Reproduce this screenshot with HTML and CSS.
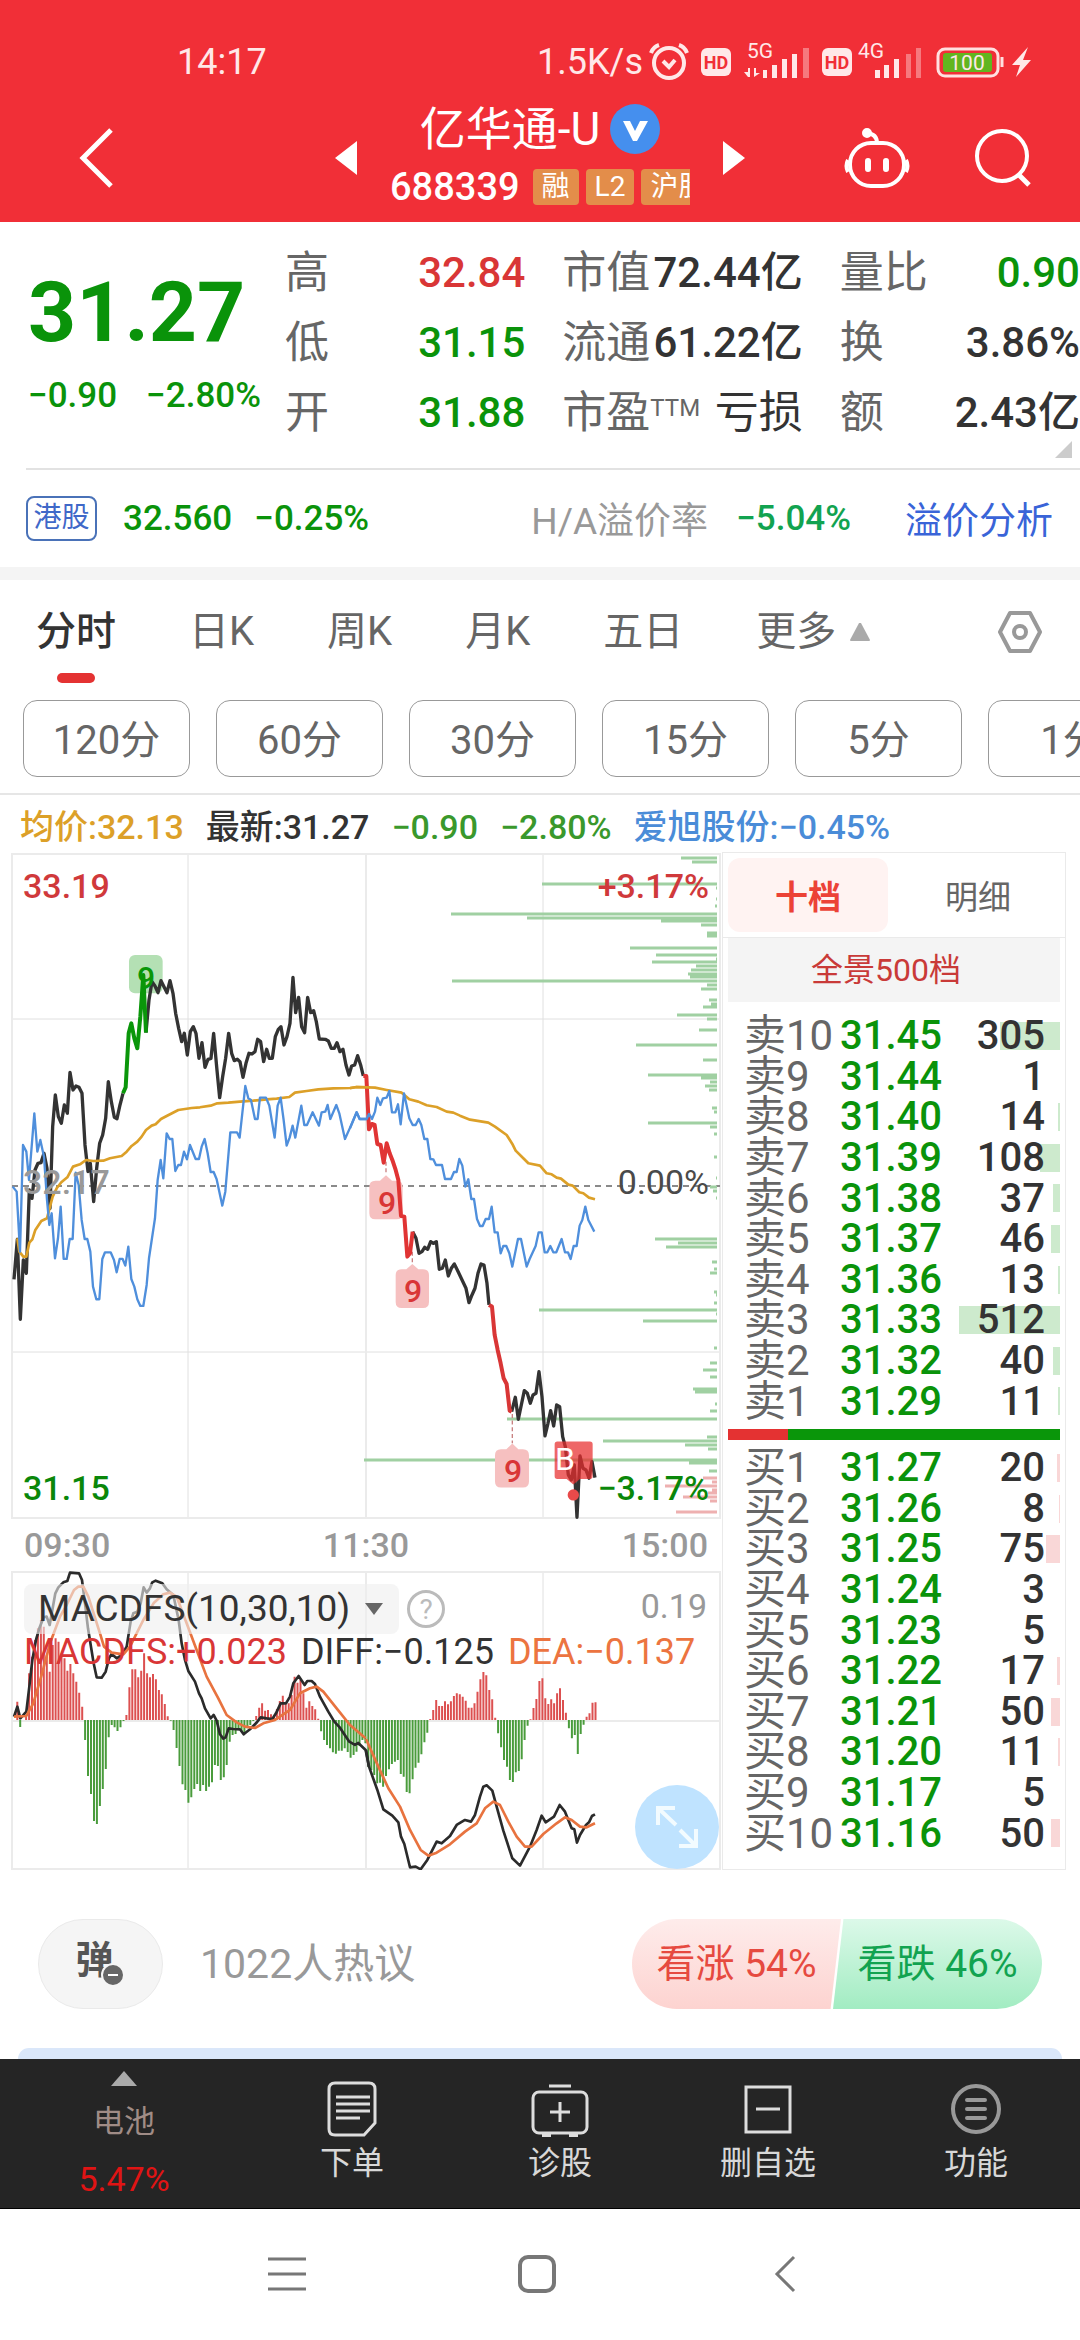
FILE: index.html
```html
<!DOCTYPE html>
<html lang="zh-CN">
<head>
	<meta charset="UTF-8">
	<meta name="viewport" content="width=device-width">
	<title>亿华通-U 688339</title>
	<link rel="stylesheet" href="styles.css">
</head>
<body>
	<header class="top">
		<div class="status">
			<span>14:17</span>
			<div class="status-right">
				<span>1.5K/s</span>
				<svg class="status-icons" width="388" height="44" viewBox="646 40 388 44">
					<g fill="none" stroke="#ffe8e8" stroke-width="4">
						<circle cx="669" cy="63" r="15"/>
						<path d="M651 53q2-6 8-8M687 53q-2-6-8-8M663 61l6 6 6-7"/>
					</g>
					<g fill="#ffe8e8">
						<rect x="701" y="48" width="30" height="28" rx="6"/>
						<rect x="822" y="48" width="30" height="28" rx="6"/>
						<path d="M763 70h4v8h-4zM772 65h5v13h-5zM782 59h5v19h-5zM792 54h5v24h-5zM748 68h2v9h-2l-4-5h4zM754 77v-9h2v5h4zM875 70h5v8h-5zM884 65h5v13h-5zM894 59h5v19h-5z"/>
						<path d="M803 48h6v30h-6zM906 54h5v24h-5zM916 48h5v30h-5z" opacity=".4"/>
						<path d="M1028 47l-16 18h8l-4 12 15-17h-8z"/>
					</g>
					<rect x="938" y="49" width="60" height="27" rx="7" fill="none" stroke="#ffe0e0" stroke-width="3"/>
					<path d="M1002 57v10" stroke="#ffe0e0" stroke-width="3"/>
					<rect x="943" y="53" width="49" height="19" rx="3" fill="#62b51f"/>
					<g font-size="18" font-weight="700" fill="#f12f37" text-anchor="middle">
						<text x="716" y="69">HD</text>
						<text x="837" y="69">HD</text>
					</g>
					<g font-size="21" fill="#ffe8e8" text-anchor="middle">
						<text x="760" y="58">5G</text>
						<text x="871" y="58">4G</text>
						<text x="967" y="70">100</text>
					</g>
				</svg>
			</div>
		</div>
		<div class="title-bar">
			<button class="icon-btn back" aria-label="返回"><svg width="36" height="64" viewBox="0 0 36 64"><path d="M33 4L5 32l28 28" fill="none" stroke="#fff" stroke-width="5"/></svg></button>
			<button class="icon-btn prev" aria-label="上一只"><svg width="22" height="34" viewBox="0 0 22 34"><path d="M22 0v34L0 17z" fill="#fff"/></svg></button>
			<div class="stock">
				<h1 class="stock-name">亿华通-U
					<svg width="50" height="50" viewBox="0 0 50 50"><circle cx="25" cy="25" r="25" fill="#458fee"/><path d="M13 17h7l5 10 5-10h8L27 37h-4z" fill="#fff"/></svg>
				</h1>
				<div class="stock-code"><b>688339</b><span class="tag">融</span><span class="tag">L2</span><span class="tag">沪股通</span></div>
			</div>
			<button class="icon-btn next" aria-label="下一只"><svg width="22" height="34" viewBox="0 0 22 34"><path d="M0 0v34l22-17z" fill="#fff"/></svg></button>
			<button class="icon-btn robot" aria-label="智能助手"><svg width="66" height="62" viewBox="0 0 66 62" fill="none" stroke="#fff" stroke-width="4">
				<rect x="6" y="16" width="54" height="43" rx="21"/>
				<path d="M33 16q0-9-10-10M4 33q-3 6 0 12M62 33q3 6 0 12"/>
				<circle cx="23" cy="6" r="3" fill="#fff"/>
				<path d="M24 34v8M42 34v8" stroke-width="6" stroke-linecap="round"/>
			</svg></button>
			<button class="icon-btn search" aria-label="搜索"><svg width="60" height="60" viewBox="0 0 60 60" fill="none" stroke="#fff" stroke-width="4"><circle cx="29" cy="28" r="25"/><path d="M46 47l10 10" stroke-width="5"/></svg></button>
		</div>
	</header>

	<section class="quote">
		<div class="price down">
			<strong class="price-now">31.27</strong>
			<div class="price-change"><span>−0.90</span><span>−2.80%</span></div>
		</div>
		<dl class="facts">
			<div><dt>高</dt><dd class="up">32.84</dd></div>
			<div><dt>市值</dt><dd>72.44亿</dd></div>
			<div><dt>量比</dt><dd class="down">0.90</dd></div>
			<div><dt>低</dt><dd class="down">31.15</dd></div>
			<div><dt>流通</dt><dd>61.22亿</dd></div>
			<div><dt>换</dt><dd>3.86%</dd></div>
			<div><dt>开</dt><dd class="down">31.88</dd></div>
			<div><dt>市盈<sup>TTM</sup></dt><dd class="plain">亏损</dd></div>
			<div><dt>额</dt><dd>2.43亿</dd></div>
		</dl>
		<svg class="corner" width="17" height="17" viewBox="0 0 17 17"><path d="M17 0v17H0z" fill="#ccc"/></svg>
	</section>

	<section class="hk">
		<span class="hk-tag">港股</span>
		<span class="hk-num down">32.560</span>
		<span class="hk-num down">−0.25%</span>
		<span class="hk-label">H/A溢价率</span>
		<span class="hk-num teal">−5.04%</span>
		<a class="hk-link" href="#">溢价分析</a>
	</section>

	<nav class="tabs">
		<a class="tab on" href="#">分时</a>
		<a class="tab" href="#">日K</a>
		<a class="tab" href="#">周K</a>
		<a class="tab" href="#">月K</a>
		<a class="tab" href="#">五日</a>
		<a class="tab" href="#">更多<svg width="20" height="18" viewBox="0 0 20 18"><path d="M9 0h2l9 17q0 1-1 1H1q-1 0-1-1z" fill="#aaa"/></svg></a>
		<button class="icon-btn setting" aria-label="设置"><svg width="46" height="46" viewBox="0 0 46 46" fill="none" stroke="#999" stroke-width="4"><path d="M13 4h20l10 19-10 19H13L3 23z" stroke-linejoin="round"/><circle cx="23" cy="23" r="6"/></svg></button>
	</nav>
	<div class="chips">
		<button class="chip">120分</button>
		<button class="chip">60分</button>
		<button class="chip">30分</button>
		<button class="chip">15分</button>
		<button class="chip">5分</button>
		<button class="chip">1分</button>
	</div>

	<div class="legend">
		<span class="avg">均价:32.13</span>
		<span>最新:31.27</span>
		<span class="green">−0.90</span>
		<span class="green">−2.80%</span>
		<span class="blue">爱旭股份:−0.45%</span>
	</div>

	<main class="board">
		<div class="charts">
			<svg class="chart" viewBox="0 0 722 666">
				<g fill="none" stroke="#e0e0e0">
					<path d="M188 1v664M543 1v664M12 166h708M12 499h708"/>
					<path d="M12 1h708v664H12zM366 1v664" stroke="#ebebeb" stroke-width="2"/>
				</g>
				<path d="M12 333h708" stroke="#8a8a8a" stroke-width="2" stroke-dasharray="6 5"/>
				<path id="depthGreen" stroke="#a0d0a2" stroke-width="3"/>
				<path id="depthRed" stroke="#eeb0b0" stroke-width="3"/>
				<!-- morning, 09:30 to 11:30 -->
				<g transform="translate(0 -13) scale(.3333)" fill="none" stroke-width="10" stroke-linejoin="round">
					<rect x="387" y="345" width="101" height="115" rx="18" fill="#b4e0b4"/>
					<polyline stroke="#333" points="42,1318 52,1198 61,1438 70,1260 79,1300 88,1050 96,1075 105,990 114,970 123,968 132,940 141,985 150,1105 158,860 166,765 175,830 184,850 193,795 202,820 210,697 219,750 228,738 237,742 246,760 255,915 264,995 271,970 281,1085 290,985 299,910 308,885 317,835 325,725 334,785 343,832 351,836 360,795 369,760"/>
					<polyline stroke="#333" points="438,578 447,480 456,425 465,438 474,458 483,422 492,440 501,458 510,422 519,460 527,520 536,565 545,605 553,580 562,645 571,575 580,560 588,580 597,655 606,608 615,682 624,658 633,655 641,580 650,680 659,773 668,710 677,655 686,580 695,640 703,662 712,658 720,665 729,712 738,670 747,640 756,642 765,635 773,598 782,605 791,665 800,628 808,655 817,655 826,590 835,568 843,560 852,615 861,590 870,550 879,412 887,518 896,472 905,560 914,578 923,472 932,518 941,512 949,545 958,597 976,598 985,603 994,625 1003,625 1011,608 1020,635 1029,628 1038,675 1047,705 1055,678 1064,675 1073,647 1082,675 1090,708"/>
					<polyline stroke="#0a960a" stroke-width="12" points="369,760 377,742 386,580 394,550 403,595 412,625 421,530 430,405 438,578"/>
					<polyline stroke="#dca028" stroke-width="8" points="52,1195 58,1235 70,1250 79,1250 88,1208 97,1198 106,1170 124,1143 141,1135 150,1100 158,1070 170,1045 184,1027 202,1012 219,980 240,973 258,960 280,963 310,962 330,955 365,948 380,935 395,918 412,905 425,890 438,870 455,857 467,853 483,837 500,828 535,810 575,804 600,802 632,797 652,790 685,788 720,785 760,782 800,778 830,776 868,771 885,758 920,753 955,748 1000,745 1050,744 1070,741 1110,742"/>
					<polyline stroke="#4f8fdc" stroke-width="7" points="38,1040 50,1055 60,1235 69,915 79,935 87,1020 103,820 112,935 121,900 132,950 141,1080 148,1155 155,1120 165,1255 174,1195 182,1100 191,1257 200,1257 209,1197 218,1197 227,998 236,1035 245,1140 254,1197 262,1197 271,1235 279,1340 289,1378 298,1378 307,1257 315,1237 332,1237 342,1260 350,1297 359,1257 368,1257 376,1277 385,1220 394,1317 403,1340 412,1378 421,1398 430,1398 440,1335 447,1255 465,1135 473,1020 482,960 490,1015 500,880 509,897 517,897 526,993 535,975 543,975 552,935 561,958 570,915 587,957 597,957 605,920 614,897 623,940 632,996 641,996 650,1018 667,1097 676,1055 691,877 711,877 719,893 736,738 745,775 753,780 765,837 773,837 780,773 798,773 808,797 824,893 833,797 842,773 851,840 860,917 869,893 878,857 886,893 904,797 913,855 921,855 938,817 957,857 965,817 976,815 983,795 991,837 1009,795 1018,820 1035,897 1053,857 1070,817 1079,837 1100,837"/>
				</g>
				<!-- afternoon, 13:00 on -->
				<g transform="translate(350 -13) scale(.3333)" fill="none" stroke-width="10" stroke-linejoin="round">
					<g fill="#f6c0c0">
						<path d="M76 1022h14l18-16 18 16h14q18 0 18 18v80q0 18-18 18H76q-18 0-18-18v-80q0-18 18-18z"/>
						<path d="M155 1288h14l18-16 18 16h14q18 0 18 18v80q0 18-18 18h-64q-18 0-18-18v-80q0-18 18-18z"/>
						<path d="M453 1828h16l18-17 18 17h14q18 0 18 18v79q0 18-18 18h-66q-18 0-18-18v-79q0-18 18-18z"/>
					</g>
					<path stroke="#c98080" stroke-width="4" stroke-dasharray="12 8" d="M108 965v40M187 1235v38M487 1722v88"/>
					<polyline stroke="#333" points="188,1175 198,1195 207,1240 216,1235 224,1222 233,1228 242,1205 250,1210 259,1205 268,1288 277,1285 286,1260 295,1308 304,1285 313,1272 322,1290 348,1345 357,1388 366,1365 375,1345 384,1300 393,1272 402,1275 411,1330 417,1395"/>
					<polyline stroke="#333" points="485,1715 496,1672 505,1738 523,1652 532,1660 541,1690 549,1665 558,1660 567,1595 576,1670 585,1788 594,1750 602,1712 611,1758 620,1695 629,1700 638,1790 646,1820 655,1905 664,1920 673,1875 681,2032 690,1848 699,1885 708,1890 717,1915 726,1865 735,1913"/>
					<polyline stroke="#e03434" stroke-width="12" points="40,708 49,708 57,868 66,852 74,855 82,912 92,915 101,968 110,910 119,940 127,960 137,990 145,1020 153,1128 163,1130 172,1250 180,1240 188,1175"/>
					<polyline stroke="#d93636" stroke-width="12" points="417,1395 426,1400 434,1485 443,1530 452,1570 461,1615 470,1632 479,1712 485,1715"/>
					<polyline stroke="#dca028" stroke-width="8" points="0,745 20,741 75,743 110,750 155,758 178,778 205,785 230,796 260,801 290,815 310,818 330,827 360,839 415,848 435,860 470,885 487,912 497,932 520,955 535,970 570,977 590,1000 605,1003 620,1013 633,1016 655,1034 668,1037 688,1057 700,1060 717,1073 735,1078"/>
					<polyline stroke="#4f8fdc" stroke-width="7" points="0,865 20,817 29,837 50,837 57,822 66,837 75,815 82,773 91,795 99,775 110,773 118,753 126,817 136,817 144,793 152,853 162,760 178,835 188,855 197,855 206,837 214,855 223,897 232,897 241,957 250,958 258,975 276,975 285,1017 303,1017 312,996 320,996 328,957 337,977 346,1040 355,1018 364,1077 372,1077 381,1137 390,1158 398,1158 407,1137 417,1137 425,1100 434,1177 443,1177 452,1240 460,1218 469,1218 478,1240 487,1280 504,1197 513,1197 530,1280 539,1257 557,1218 566,1177 575,1177 584,1237 592,1237 601,1218 610,1237 619,1237 635,1197 645,1237 654,1237 662,1257 671,1218 680,1218 689,1157 697,1140 706,1100 715,1140 733,1175"/>
					<path fill="#e82c2c" opacity=".72" d="M622 1805h98q8 0 8 8v96q0 8-8 8h-30l-20 17-20-17h-28q-8 0-8-8v-96q0-8 8-8z"/>
					<circle cx="670" cy="1965" r="17" fill="#e84a4a"/>
				</g>
				<g font-size="32" text-anchor="middle" font-weight="500">
					<text x="146" y="136" fill="#0a960a">9</text>
					<text x="387" y="361" fill="#d93636">9</text>
					<text x="413" y="449" fill="#d93636">9</text>
					<text x="513" y="629" fill="#d93636">9</text>
					<text x="565" y="617" fill="#fff" font-weight="400">B</text>
				</g>
				<g font-size="34" font-weight="500">
					<text x="23" y="45" fill="#d0393b">33.19</text>
					<text x="23" y="341" fill="#999">32.17</text>
					<text x="23" y="647" fill="#0a870a">31.15</text>
					<g text-anchor="end">
						<text x="709" y="45" fill="#d0393b">+3.17%</text>
						<text x="709" y="341" fill="#4a4a4a" font-weight="400">0.00%</text>
						<text x="709" y="647" fill="#0a870a">−3.17%</text>
					</g>
				</g>
			</svg>
			<div class="hours"><span>09:30</span><span>11:30</span><span>15:00</span></div>
			<div class="macd">
				<svg class="chart" viewBox="0 0 722 299">
					<g fill="none" stroke="#e0e0e0">
						<path d="M188 1v297M543 1v297"/>
						<path d="M12 1h708v297H12zM366 1v297M12 150h708" stroke="#ebebeb" stroke-width="2"/>
					</g>
					<path id="macdUp" stroke="#dc5050" stroke-width="2"/>
					<path id="macdDown" stroke="#4a9c3c" stroke-width="2"/>
					<g transform="translate(0 -71) scale(.3333)" fill="none" stroke-width="8" stroke-linejoin="round">
						<polyline stroke="#2b2b2b" points="42,650 52,620 61,655 79,635 88,560 97,480 108,420 118,385 131,352 140,350 149,375 158,325 166,280 175,262 190,247 202,243 210,218 237,220 246,240 255,310 264,385 281,490 290,532 305,533 317,515 327,475 335,462 350,475 365,465 380,440 392,365 400,340 412,335 422,310 431,262 440,278 450,265 457,247 467,242 487,250 500,268 520,285 536,360 545,430 555,480 565,513 585,545 597,580 605,595 615,625 632,655 641,645 650,662 660,703 670,716 677,712 686,685 700,687 720,688 731,703 750,688 768,670 782,652 800,655 817,657 828,640 842,610 858,610 870,590 880,550 896,528 914,555 922,543 935,543 945,552 960,590 985,635 1003,665 1020,683 1048,725 1065,735 1075,729 1097,750 1107,800"/>
						<polyline stroke="#e8733f" points="42,650 79,648 100,610 125,525 150,430 180,350 200,315 222,270 235,260 250,260 265,290 300,400 312,440 335,458 370,463 390,440 430,360 462,308 490,283 510,278 530,290 560,370 590,450 620,530 655,595 680,645 710,667 735,680 765,684 790,670 825,660 870,630 900,580 930,565 950,560 970,575 1010,625 1050,675 1097,715"/>
					</g>
					<g transform="translate(350 -11) scale(.3333)" fill="none" stroke-width="8" stroke-linejoin="round">
						<polyline stroke="#2b2b2b" points="48,570 57,620 82,690 100,748 127,767 145,787 153,830 163,852 180,922 197,920 212,928 232,900 260,845 275,850 300,828 320,795 345,780 363,785 375,765 390,710 400,680 410,676 427,692 440,740 460,812 487,895 510,917 540,860 560,810 575,767 587,787 612,770 629,735 645,755 665,805 673,808 681,848 690,825 708,795 717,787 726,768 735,763"/>
						<polyline stroke="#e8733f" points="48,537 85,620 115,685 150,740 180,810 212,870 235,887 260,878 300,853 345,815 380,790 405,745 430,725 450,735 475,785 500,830 525,860 545,860 580,822 620,790 645,772 665,780 690,800 710,802 735,790"/>
					</g>
				</svg>
				<div class="macd-info">
					<div class="macd-head">
						<label class="macd-pick">
							<select aria-label="指标"><option>MACDFS(10,30,10)</option></select>
							<svg width="18" height="12" viewBox="0 0 18 12"><path d="M0 0h18l-9 12z" fill="#666"/></svg>
						</label>
						<button class="icon-btn help" aria-label="指标说明">?</button>
						<span class="macd-max">0.19</span>
					</div>
					<div class="macd-values"><span class="up">MACDFS:+0.023</span><span>DIFF:−0.125</span><span class="dea">DEA:−0.137</span></div>
				</div>
				<button class="icon-btn expand" aria-label="放大"><svg width="44" height="44" viewBox="0 0 44 44" fill="none" stroke="#f2fbff" stroke-width="4"><path d="M3 20V3h17M3 3l18 17M41 24v17H24M41 41L25 25"/></svg></button>
			</div>
		</div>

		<aside class="book">
			<div class="book-tabs">
				<button class="book-tab on">十档</button>
				<button class="book-tab">明细</button>
			</div>
			<a class="book-all" href="#">全景500档</a>
			<table class="levels sell">
				<tr><th>卖10</th><td>31.45</td><td><i style="width:60px"></i><b>305</b></td></tr>
				<tr><th>卖9</th><td>31.44</td><td><b>1</b></td></tr>
				<tr><th>卖8</th><td>31.40</td><td><i style="width:2px"></i><b>14</b></td></tr>
				<tr><th>卖7</th><td>31.39</td><td><i style="width:20px"></i><b>108</b></td></tr>
				<tr><th>卖6</th><td>31.38</td><td><i style="width:7px"></i><b>37</b></td></tr>
				<tr><th>卖5</th><td>31.37</td><td><i style="width:9px"></i><b>46</b></td></tr>
				<tr><th>卖4</th><td>31.36</td><td><i style="width:2px"></i><b>13</b></td></tr>
				<tr><th>卖3</th><td>31.33</td><td><i style="width:101px"></i><b>512</b></td></tr>
				<tr><th>卖2</th><td>31.32</td><td><i style="width:7px"></i><b>40</b></td></tr>
				<tr><th>卖1</th><td>31.29</td><td><i style="width:2px"></i><b>11</b></td></tr>
			</table>
			<div class="ratio"><i style="width:18%"></i></div>
			<table class="levels buy">
				<tr><th>买1</th><td>31.27</td><td><i style="width:3px"></i><b>20</b></td></tr>
				<tr><th>买2</th><td>31.26</td><td><i style="width:1px"></i><b>8</b></td></tr>
				<tr><th>买3</th><td>31.25</td><td><i style="width:14px"></i><b>75</b></td></tr>
				<tr><th>买4</th><td>31.24</td><td><b>3</b></td></tr>
				<tr><th>买5</th><td>31.23</td><td><b>5</b></td></tr>
				<tr><th>买6</th><td>31.22</td><td><i style="width:3px"></i><b>17</b></td></tr>
				<tr><th>买7</th><td>31.21</td><td><i style="width:9px"></i><b>50</b></td></tr>
				<tr><th>买8</th><td>31.20</td><td><i style="width:2px"></i><b>11</b></td></tr>
				<tr><th>买9</th><td>31.17</td><td><b>5</b></td></tr>
				<tr><th>买10</th><td>31.16</td><td><i style="width:9px"></i><b>50</b></td></tr>
			</table>
		</aside>
	</main>

	<section class="talk">
		<button class="danmu" aria-label="关闭弹幕">弹<svg width="24" height="24" viewBox="0 0 24 24"><circle cx="12" cy="12" r="11" fill="#666" stroke="#f5f5f5" stroke-width="2"/><path d="M7 12h10" stroke="#fff" stroke-width="2"/></svg></button>
		<span class="talk-count">1022人热议</span>
		<div class="vote">
			<button class="vote-up">看涨 54%</button>
			<button class="vote-down">看跌 46%</button>
		</div>
	</section>
	<div class="card-edge"></div>

	<nav class="toolbar">
		<a class="sector" href="#">
			<svg width="26" height="15" viewBox="0 0 26 15"><path d="M13 0l13 15H0z" fill="#aaa"/></svg>
			<span class="sector-name">电池</span>
			<span class="sector-rate">5.47%</span>
		</a>
		<a class="tool" href="#"><svg width="60" height="56" viewBox="0 0 60 56" fill="none" stroke="#ddd" stroke-width="3"><path d="M13 2h34q6 0 6 6v34L42 54H13q-6 0-6-6V8q0-6 6-6z"/><path d="M14 16h34M14 23h34M14 30h34M14 37h24"/></svg>下单</a>
		<a class="tool" href="#"><svg width="60" height="56" viewBox="0 0 60 56" fill="none" stroke="#ddd" stroke-width="3"><rect x="3" y="11" width="54" height="41" rx="6"/><path d="M19 5h22M30 21v20M20 31h20"/><path d="M12 54h9M39 54h9" stroke-width="4"/></svg>诊股</a>
		<a class="tool" href="#"><svg width="60" height="56" viewBox="0 0 60 56" fill="none" stroke="#ddd" stroke-width="3"><path d="M8 6h44v45H8zM18 28h24"/></svg>删自选</a>
		<a class="tool" href="#"><svg width="60" height="56" viewBox="0 0 60 56" fill="none" stroke="#999" stroke-width="4"><circle cx="30" cy="28" r="23"/><path d="M21 19h18M21 28h18M21 37h18" stroke-linecap="round"/></svg>功能</a>
	</nav>
	<footer class="sysnav">
		<svg width="40" height="40" viewBox="0 0 40 40" fill="none" stroke="#777" stroke-width="3"><path d="M1 5h38M1 20h38M1 35h38"/></svg>
		<svg width="40" height="40" viewBox="0 0 40 40" fill="none" stroke="#777" stroke-width="4"><rect x="3" y="3" width="34" height="34" rx="8"/></svg>
		<svg width="40" height="40" viewBox="0 0 40 40" fill="none" stroke="#777" stroke-width="3"><path d="M27 3L10 20l17 17"/></svg>
	</footer>
	<script src="chart.js"></script>
</body>
</html>
```
FILE: styles.css
```css
*{ margin:0; padding:0; box-sizing:border-box;}
body{ background:#fff; color:#333; font-family:Roboto,"Noto Sans CJK SC",sans-serif; overflow-x:hidden;}
a{ color:inherit; text-decoration:none;}
button,select{ font:inherit; color:inherit; border:0; background:none; appearance:none;}
svg{ display:block; flex:none;}
svg text{ font-family:Roboto,"Noto Sans CJK SC",sans-serif;}
.icon-btn{ display:flex; align-items:center; justify-content:center;}
.up{ color:#d93636;}
.down{ color:#0a930a;}
.teal{ color:#12a350;}
.green{ color:#3a982c;}
.blue{ color:#4a8cd8;}

/* header */
.top{ background:#f12f37; color:#fff; height:222px;}
.status{ display:flex; justify-content:space-between; align-items:center; height:100px; padding:24px 46px 0 177px; font-size:36px; color:#ffe8e8;}
.status-right{ display:flex; align-items:center; gap:3px;}
.title-bar{ display:grid; grid-template-columns:334px 24px minmax(0,1fr) 24px 98px 66px 63px 60px; align-items:center; height:110px; padding-right:47px;}
.title-bar .back{ justify-content:flex-start; padding-left:78px;}
.title-bar .robot{ grid-column:6;}
.title-bar .search{ grid-column:8;}
.stock{ margin:0 32px;}
.stock-name{ display:flex; align-items:center; justify-content:center; gap:10px; height:58px; font-size:46px; line-height:50px; font-weight:400;}
.stock-code{ display:flex; align-items:center; gap:7px; height:58px; overflow:hidden; white-space:nowrap;}
.stock-code b{ font-size:38px; font-weight:500; margin-right:6px;}
.tag{ flex:none; padding:0 9px; border-radius:4px; background:#e38d4a; font-size:28px; line-height:36px;}

/* quote */
.quote{ display:flex; position:relative; height:246px; padding:16px 0 0 28px;}
.price{ flex:none; width:257px;}
.price-now{ display:block; margin-top:22px; font-size:84px; line-height:106px; font-weight:700;}
.price-change{ display:flex; gap:29px; margin-top:8px; font-size:35px; line-height:44px; font-weight:500; white-space:nowrap;}
.facts{ flex:1; display:grid; grid-template-columns:repeat(3,1fr); grid-auto-rows:70px; column-gap:37px;}
.facts div{ display:flex; justify-content:space-between; align-items:center; font-size:42px; line-height:60px; white-space:nowrap;}
.facts dt{ color:#666; font-size:44px;}
.facts dd{ font-weight:500;}
.facts .plain{ font-size:44px; font-weight:400;}
.facts sup{ font-size:24px; line-height:24px; vertical-align:12px;}
.corner{ position:absolute; right:8px; bottom:10px;}
.hk{ display:flex; align-items:center; height:112px; margin-left:26px; padding:0 27px 14px 0; border-top:2px solid #e2e2e2; font-size:37px; position:relative;}
.hk::after{ content:""; position:absolute; left:-26px; right:0; bottom:0; height:13px; background:#f4f4f4;}
.hk-tag{ width:71px; height:45px; border:2px solid #4a72b8; border-radius:8px; color:#3f68c8; font-size:28px; line-height:40px; text-align:center; margin-right:26px;}
.hk-num{ font-size:35px; font-weight:500; margin-right:22px;}
.hk-label{ color:#999; margin:0 28px 0 auto;}
.hk-num.teal{ margin-right:54px;}
.hk-link{ color:#3964d8;}

/* period tabs */
.tabs{ display:flex; height:120px; padding:22px 37px 0 36px; gap:73px; color:#666; font-size:40px; line-height:60px;}
.tab{ display:flex; align-items:center; gap:14px; height:60px; position:relative; white-space:nowrap;}
.tab.on{ color:#333; font-weight:500;}
.tab.on::after{ content:""; position:absolute; left:21px; bottom:-21px; width:38px; height:10px; border-radius:5px; background:#e43232;}
.setting{ height:60px; margin-left:auto;}
.chips{ display:flex; gap:26px; height:95px; padding-left:23px; overflow:hidden; border-bottom:2px solid #e6e6e6;}
.chip{ flex:none; width:167px; height:77px; padding-bottom:4px; border:1px solid #999; border-radius:14px; color:#666; font-size:40px;}
.legend{ display:flex; gap:22px; padding:8px 20px 0; height:58px; font-size:34px; line-height:48px; font-weight:500; white-space:nowrap;}
.avg{ color:#dca028;}

/* charts and order book */
.board{ display:grid; grid-template-columns:722fr 344fr; padding-right:14px;}
.chart{ width:100%; height:auto;}
.hours{ display:flex; justify-content:space-between; padding:0 14px 0 24px; color:#999; font-size:34px; line-height:52px; font-weight:500;}
.macd{ position:relative;}
.macd-info{ position:absolute; left:24px; right:15px; top:13px; font-size:34px;}
.macd-head{ display:flex; align-items:center; height:50px;}
.macd-pick{ display:flex; align-items:center; height:50px; padding:0 16px 0 14px; border-radius:8px; background:rgba(238,238,238,.6);}
.macd-pick select{ font-size:37px; line-height:50px; padding-right:14px;}
.help{ width:38px; height:38px; margin-left:8px; border:3px solid #bbb; border-radius:50%; color:#bbb; font-size:28px;}
.macd-max{ margin-left:auto; padding-bottom:6px; color:#999;}
.macd-values{ display:flex; gap:14px; font-size:36px; line-height:36px; white-space:nowrap;}
.dea{ color:#ec7440;}
.expand{ position:absolute; right:3px; bottom:1px; width:84px; height:84px; border-radius:50%; background:#bfe3ff;}
.book{ border:1px solid #eaeaea; margin-top:-1px;}
.book-tabs{ display:flex; height:85px; padding:5px; border-bottom:1px solid #eaeaea; font-size:33px;}
.book-tab{ flex:1; padding-left:8px; border-radius:12px; color:#666;}
.book-tab.on{ flex:0 0 160px; padding:0; background:#fff3f2; color:#ec4236; font-weight:700;}
.book-all{ display:block; margin:0 5px 14px; background:#f4f4f4; color:#c93a38; font-size:32px; line-height:64px; text-align:center; padding-right:16px;}
.levels{ width:100%; height:406px; border-collapse:collapse; table-layout:fixed; line-height:36px;}
.levels th{ width:117px; padding-left:21px; text-align:left; color:#666; font-size:42px; font-weight:400; white-space:nowrap;}
.levels td{ position:relative; color:#0a930a; font-size:40px; font-weight:500;}
.levels td:last-child{ padding-right:20px; text-align:right; color:#333;}
.levels b{ position:relative; font-weight:500;}
.levels i{ position:absolute; right:5px; top:6px; height:28px; background:#cdeacd;}
.levels.buy i{ background:#f9d7d7;}
.ratio{ height:11px; margin:7px 5px 8px; background:#0a960a;}
.ratio i{ display:block; height:11px; background:#e43232;}

/* comments */
.talk{ display:flex; align-items:center; padding:49px 38px 39px;}
.danmu{ position:relative; width:125px; height:90px; border:1px solid #eaeaea; border-radius:45px; background:#f5f5f5; color:#555; font-size:38px; line-height:50px; font-weight:700; padding:0 12px 8px 0;}
.danmu svg{ position:absolute; left:62px; top:43px;}
.talk-count{ margin-left:37px; color:#999; font-size:41px; line-height:50px;}
.vote{ display:flex; margin-left:auto; font-size:39px; line-height:50px;}
.vote button{ width:209px; height:90px; white-space:nowrap;}
.vote .vote-up{ border-radius:45px 0 0 45px; background:linear-gradient(#feeceb,#fdd3d0); color:#e64a40; clip-path:polygon(0 0,100% 0,95% 100%,0 100%);}
.vote .vote-down{ margin-left:-8px; border-radius:0 45px 45px 0; background:linear-gradient(#dcf9e9,#a2ecc2); color:#12a350; clip-path:polygon(5% 0,100% 0,100% 100%,0 100%);}
.card-edge{ height:11px; margin:0 18px; border-radius:20px 20px 0 0; background:#dae7fa;}

/* bottom bars */
.toolbar{ display:grid; grid-template-columns:248fr repeat(4,208fr); height:150px; background:#252525; color:#d8d8d8; font-size:32px; border-bottom:1px solid #000;}
.tool{ display:flex; flex-direction:column; align-items:center; padding-top:22px; gap:5px; line-height:42px;}
.sector{ display:flex; flex-direction:column; align-items:center; padding-top:12px;}
.sector-name{ margin-top:14px; color:#a08c86; font-size:31px; line-height:44px;}
.sector-rate{ margin-top:15px; color:#e01414; font-size:34px; line-height:40px;}
.sysnav{ display:flex; justify-content:space-between; align-items:center; height:130px; padding:0 273px 0 267px;}
```
FILE: chart.js
```js
// depth bars: [length, y]
var green = [[36,5],[25,9],[175,31],[1,35],[1,46],[2,53],[266,61],[190,65],[56,68],[16,72],[10,80],[10,83],[87,95],[61,102],[1,106],[65,109],[21,113],[26,117],[29,121],[27,124],[265,128],[10,132],[16,136],[8,147],[6,151],[14,154],[40,162],[10,166],[18,177],[81,192],[14,207],[69,222],[16,225],[7,229],[12,233],[8,237],[5,255],[3,259],[69,270],[7,274],[3,281],[3,304],[1,325],[7,334],[4,338],[1,345],[62,386],[39,390],[51,394],[5,409],[3,416],[7,420],[3,439],[1,442],[3,450],[178,457],[1,461],[74,468],[3,495],[7,510],[14,517],[7,524],[24,536],[22,539],[2,551],[7,558],[210,566],[10,584],[114,588],[32,592],[9,596],[353,607],[28,610],[8,618]];
var red = [[14,625],[5,629],[52,633],[5,637],[9,640],[34,644],[7,648],[41,659]];

function depth(id, list){
	var d = '';
	for(var i = 0; i<list.length; i++){
		d += 'M717 ' + list[i][1] + 'h-' + list[i][0];
	}
	document.getElementById(id).setAttribute('d', d);
}
depth('depthGreen', green);
depth('depthRed', red);

// one macd value per minute
var macd = [0,55,-21,0,10,140,190,240,275,300,280,195,145,225,245,235,190,185,148,168,140,115,82,40,-60,-168,-222,-303,-312,-258,-207,-147,-52,-15,-22,-33,-22,-3,15,98,152,152,128,148,200,140,128,138,122,90,77,48,11,-2,-30,-84,-138,-193,-210,-248,-232,-207,-192,-213,-195,-213,-200,-187,-135,-138,-180,-172,-135,-65,-45,-42,-30,-33,-38,-25,-15,-3,12,37,50,28,30,17,9,33,57,73,47,50,75,130,112,120,80,37,56,42,32,4,-34,-60,-75,-85,-97,-101,-92,-92,-85,-96,-113,-105,-95,-78,-60,-70,-140,-150,-165,-190,-188,-200,-168,-148,-132,-125,-120,-162,-170,-216,-220,-178,-143,-128,-103,-67,-38,3,30,60,42,42,56,47,56,72,80,77,70,58,37,37,50,85,122,144,134,90,62,7,-40,-82,-120,-140,-180,-186,-157,-153,-118,-60,-17,2,36,63,117,125,65,48,62,50,80,95,60,22,-25,-55,-45,-102,-42,-14,10,20,52,53];
var up = '', down = '';
for(var i = 0; i<macd.length; i++){
	var bar = 'M' + (14.3 + i*2.95).toFixed(1) + ' 149v' + (-macd[i]/3).toFixed(1);
	if(macd[i] > 0){
		up += bar;
	}else{
		down += bar;
	}
}
document.getElementById('macdUp').setAttribute('d', up);
document.getElementById('macdDown').setAttribute('d', down);
```
